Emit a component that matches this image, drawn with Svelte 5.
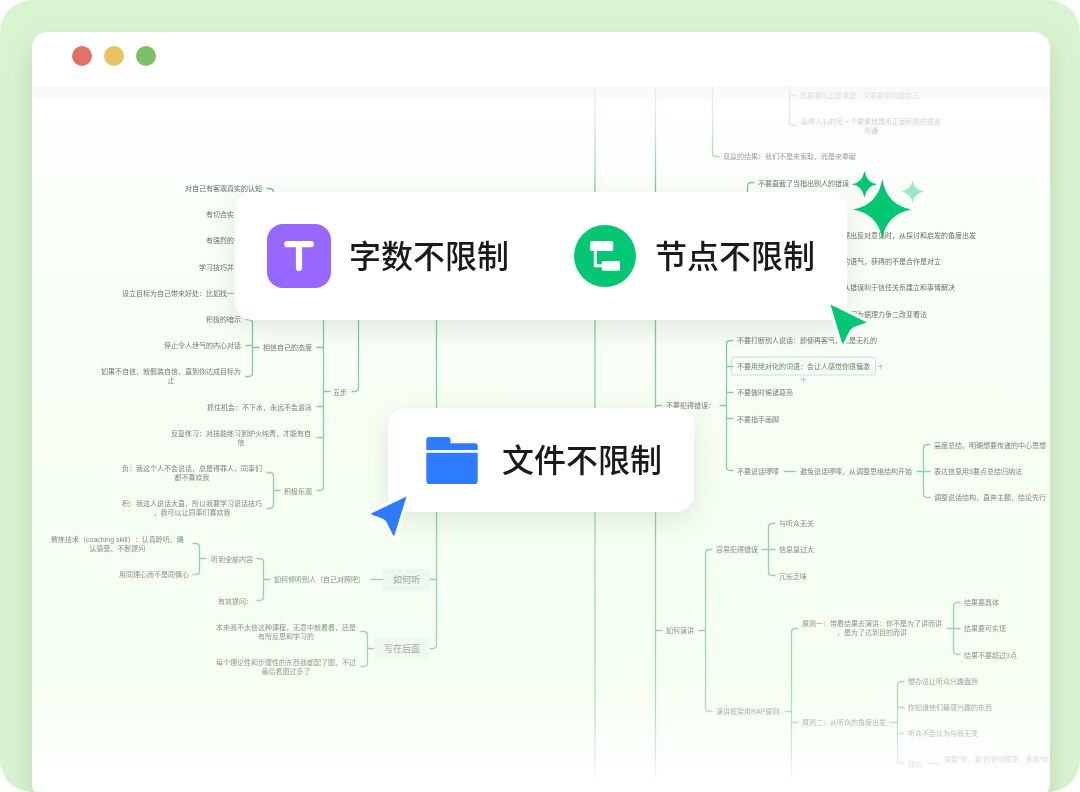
<script>
	// map coordinates share one origin for nodes and connectors
	const origin = { x: 32, y: 86 };

	// x is the left edge of a node, y its vertical centre
	const nodes = [
		{ x: 185, y: 188, text: '对自己有客观真实的认知' },
		{ x: 206, y: 214, text: '有切合实' },
		{ x: 206, y: 240, text: '有强烈的' },
		{ x: 199, y: 267, text: '学习技巧并' },
		{ x: 122, y: 293, text: '设立目标为自己带来好处：比如找一' },
		{ x: 206, y: 319, text: '积极的暗示' },
		{ x: 164, y: 345, text: '停止令人泄气的内心对话' },
		{ x: 101, y: 376, text: '如果不自信，就假装自信，直到你达成目标为\n止' },
		{ x: 263, y: 347, text: '相信自己的态度' },
		{ x: 333, y: 392, text: '五步' },
		{ x: 207, y: 407, text: '抓住机会：不下水，永远不会游泳' },
		{ x: 171, y: 438, text: '反复练习：对技能练习到炉火纯青，才能有自\n信' },
		{ x: 122, y: 473, text: '负：我这个人不会说话，总是得罪人，同事们\n都不喜欢我' },
		{ x: 122, y: 508, text: '积：我这人说话太直，所以我要学习说话技巧\n，我可以让同事们喜欢我' },
		{ x: 284, y: 491, text: '积极乐观' },
		{ x: 51, y: 544, text: '教练技术（coaching skill）：认真聆听、确\n认感受、不断提问' },
		{ x: 119, y: 574, text: '用同理心而不是同情心' },
		{ x: 211, y: 559, text: '听到全部内容' },
		{ x: 218, y: 601, text: '有效提问：' },
		{ x: 274, y: 579, text: '如何倾听别人（自己对照吧）' },
		{ x: 216, y: 632, text: '本来我不太信这种课程，无意中就看看，还是\n有所反思和学习的' },
		{ x: 216, y: 667, text: '每个理论性和步骤性的东西我都配了图，不过\n最后看图过多了' },
		{ x: 383, y: 580, text: '如何听', kind: 'topic' },
		{ x: 374, y: 649, text: '写在后面', kind: 'topic' },

		{ x: 800, y: 95, text: '既要避免过度谦虚，又要避免吹嘘自己' },
		{ x: 801, y: 126, text: '赢得人心的另一个要素就是用正面积极的语言\n沟通' },
		{ x: 723, y: 156, text: '双赢的结果：我们不是来索取，而是来奉献' },
		{ x: 758, y: 183, text: '不要直截了当指出别人的错误' },
		{ x: 843, y: 235, text: '提出反对意见时，从探讨和启发的角度出发' },
		{ x: 843, y: 261, text: '的语气，获得的不是合作是对立' },
		{ x: 843, y: 287, text: '从错误利于信任关系建立和事情解决' },
		{ x: 850, y: 314, text: '因为据理力争二改变看法' },
		{ x: 666, y: 405, text: '不要犯得错误：' },
		{ x: 737, y: 340, text: '不要打断别人说话：即使再客气，也是无礼的' },
		{ x: 731, y: 366, text: '不要用绝对化的词语：会让人感觉你很偏激', kind: 'selected' },
		{ x: 737, y: 392, text: '不要做时候诸葛亮' },
		{ x: 737, y: 419, text: '不要指手画脚' },
		{ x: 737, y: 471, text: '不要说话啰嗦' },
		{ x: 800, y: 471, text: '避免说话啰嗦，从调整思维结构开始' },
		{ x: 934, y: 445, text: '高度总结，明确想要传递的中心思想' },
		{ x: 934, y: 471, text: '表达信息用3要点总结归纳法' },
		{ x: 934, y: 497, text: '调整说话结构，直奔主题，结论先行' },
		{ x: 716, y: 549, text: '容易犯得错误' },
		{ x: 779, y: 523, text: '与听众无关' },
		{ x: 779, y: 549, text: '信息量过大' },
		{ x: 779, y: 576, text: '冗长乏味' },
		{ x: 666, y: 630, text: '如何演讲' },
		{ x: 716, y: 711, text: '演讲框架用RAP原则:' },
		{ x: 802, y: 628, text: '原则一：带着结果去演讲：你不是为了讲而讲\n，是为了达到目的而讲' },
		{ x: 964, y: 602, text: '结果要具体' },
		{ x: 964, y: 628, text: '结果要可实现' },
		{ x: 964, y: 655, text: '结果不要超过3点' },
		{ x: 802, y: 722, text: '原则二：从听众的角度出发' },
		{ x: 908, y: 681, text: '想办法让听众兴趣盎然' },
		{ x: 908, y: 707, text: '你知道他们最感兴趣的东西' },
		{ x: 908, y: 733, text: '听众不会认为与我无关' },
		{ x: 908, y: 764, text: '技巧' },
		{ x: 944, y: 764, text: '调整“你，我”的使用频率，多用“你\n”' }
	];

	// from/to span the trunk, ends are its rounded tips, mids the rows between, stub leads to the parent
	const brackets = [
		{ x: 273, side: -1, from: 188, to: 230, ends: [188] },
		{ x: 252, side: -1, from: 319, to: 376, ends: [319, 376], mids: [345], stub: 347 },
		{ x: 323, side: -1, from: 300, to: 490, ends: [490], mids: [347, 406, 437], stub: 391 },
		{ x: 358, side: -1, from: 300, to: 391, ends: [391] },
		{ x: 273, side: -1, from: 472, to: 508, ends: [472, 508], stub: 490 },
		{ x: 199, side: -1, from: 543, to: 574, ends: [543, 574], stub: 558 },
		{ x: 263, side: -1, from: 558, to: 600, ends: [558, 600], stub: 579 },
		{ x: 436, side: -1, from: 300, to: 648, ends: [648], mids: [579] },
		{ x: 367, side: -1, from: 631, to: 666, ends: [631, 666], stub: 648 },

		{ x: 789, side: 1, from: 86, to: 125, ends: [125], mids: [95] },
		{ x: 712, side: 1, from: 86, to: 156, ends: [156] },
		{ x: 747, side: 1, from: 182, to: 230, ends: [182] },
		{ x: 655, side: 1, from: 86, to: 786, ends: [], mids: [405, 630] },
		{ x: 726, side: 1, from: 340, to: 470, ends: [340, 470], mids: [366, 392, 418], stub: 405 },
		{ x: 923, side: 1, from: 444, to: 497, ends: [444, 497], mids: [471], stub: 471 },
		{ x: 705, side: 1, from: 549, to: 711, ends: [549, 711], stub: 630 },
		{ x: 768, side: 1, from: 523, to: 575, ends: [523, 575], mids: [549], stub: 549 },
		{ x: 791, side: 1, from: 628, to: 790, ends: [628], mids: [722], stub: 711 },
		{ x: 953, side: 1, from: 602, to: 654, ends: [602, 654], mids: [628], stub: 628 },
		{ x: 897, side: 1, from: 681, to: 763, ends: [681, 763], mids: [707, 733], stub: 722 }
	];

	const links = ['M370 579H383', 'M783 471H796', 'M926 763H939'];

	function bracketPath({ x, side, from, to, ends, mids = [], stub }) {
		const tip = x + side * 7;
		const bend = x + side * 4;
		const roundTop = ends.includes(from);
		const roundBottom = ends.includes(to);
		let d = roundTop ? `M${tip} ${from}H${bend}Q${x} ${from} ${x} ${from + 4}` : `M${x} ${from}`;
		d += roundBottom ? `V${to - 4}Q${x} ${to} ${bend} ${to}H${tip}` : `V${to}`;
		for (const y of mids) d += `M${x} ${y}H${tip}`;
		if (stub) d += `M${x} ${stub}H${x - side * 7}`;
		return d;
	}
</script>

<main class="frame">
	<section class="window">
		<header class="titlebar">
			<span class="dot red"></span>
			<span class="dot yellow"></span>
			<span class="dot green"></span>
		</header>

		<div class="canvas">
			<div class="map">
				<svg class="lines" viewBox="32 86 1018 706" aria-hidden="true">
					<path class="root" d="M595 86V786" />
					{#each brackets as bracket}
						<path d={bracketPath(bracket)} transform="translate(.5 .5)" />
					{/each}
					{#each links as d}
						<path {d} transform="translate(.5 .5)" />
					{/each}
					<path class="plus" d="M878 366.500H883M880.500 364V369M801 379.500H806M803.500 377V382" />
				</svg>
				{#each nodes as node}
					<p class="node {node.kind ?? ''}" style="left: {node.x - origin.x}px; top: {node.y - origin.y}px">{node.text}</p>
				{/each}
			</div>

			<div class="cards">
				<div class="card">
					<div class="feature">
						<svg class="icon" viewBox="0 0 64 64" aria-hidden="true">
							<rect width="64" height="64" rx="16" fill="#9767ff" />
							<path d="M20.300 20.200H43.800M32 20.200V44" fill="none" stroke="#fff" stroke-width="6.200" stroke-linecap="round" />
						</svg>
						<h2>字数不限制</h2>
					</div>
					<div class="feature">
						<svg class="icon" viewBox="0 0 64 64" aria-hidden="true">
							<circle cx="32" cy="32" r="31" fill="#04c774" />
							<path d="M22.300 25V41.800H31" fill="none" stroke="#fff" stroke-width="3" />
							<rect x="17.200" y="17" width="23" height="10" rx="1.500" fill="#fff" />
							<rect x="28.800" y="37" width="18.200" height="9.800" rx="1.500" fill="#fff" />
						</svg>
						<h2>节点不限制</h2>
					</div>
					<svg class="sparkles" viewBox="0 0 72 68" aria-hidden="true">
						<path d="M12.500 0Q14.500 11.500 25 13.300Q14.500 15 12.500 26.500Q10.500 15 0 13.300Q10.500 11.500 12.500 0Z" />
						<path d="M30.300 8Q34.500 34 59.500 38.500Q34.500 43 30.300 68Q26 43 1 38.500Q26 34 30.300 8Z" />
						<path class="pale" d="M60.500 9.500Q62.300 18.700 71.500 20.500Q62.300 22.300 60.500 32Q58.700 22.300 49.500 20.500Q58.700 18.700 60.500 9.500Z" />
					</svg>
					<svg class="pointer right" viewBox="0 0 44 48" aria-hidden="true">
						<path d="M4.500 4.500L39.500 21.800Q40.500 22.500 39.500 23L30.500 26Q25.500 27.500 23.500 31L17.500 43Q16.600 44.300 16 43Z" />
					</svg>
				</div>

				<div class="card small">
					<div class="feature">
						<svg class="icon" viewBox="0 0 64 64" fill="#2e7bff" aria-hidden="true">
							<path d="M6.300 22V12Q6.300 9 9.300 9H27.500Q30.500 9 30.500 12V15.300H55Q57.700 15.300 57.700 18V22Z" />
							<path d="M6.300 24.700H57.700V53Q57.700 56 54.700 56H9.300Q6.300 56 6.300 53Z" />
						</svg>
						<h2>文件不限制</h2>
					</div>
					<svg class="pointer left" viewBox="0 0 44 48" aria-hidden="true">
						<path d="M39.500 4.500L4.500 21.300Q3.500 22 4.500 22.500L14 26Q19 27.500 20.500 32L26 43Q26.800 44.300 27.500 43Z" />
					</svg>
				</div>
			</div>
		</div>
	</section>
</main>

<style>
	:global(body) {
		background: #fff;
		font-family: "Liberation Sans", "Noto Sans CJK SC", sans-serif;
	}

	.frame {
		display: flex;
		box-sizing: border-box;
		min-height: 100vh;
		padding: 32px 30px 0 32px;
		background: #d9f4d1;
		border-radius: 32px;
		overflow: hidden;
	}

	/* the lower edge runs out of the frame */
	.window {
		flex: 1;
		min-width: 0;
		display: flex;
		flex-direction: column;
		margin-bottom: -7px;
		background: #fff;
		border-radius: 16px;
		box-shadow: 0 12px 28px rgba(60, 90, 50, 0.18);
		overflow: hidden;
	}

	.titlebar {
		display: flex;
		gap: 12px;
		box-sizing: border-box;
		height: 54px;
		padding: 14px 40px;
	}

	.dot {
		width: 20px;
		height: 20px;
		border-radius: 50%;
	}

	.red {
		background: #e17065;
	}

	.yellow {
		background: #eac262;
	}

	.green {
		background: #7cc164;
	}

	.canvas {
		flex: 1;
		display: grid;
		grid-template-columns: minmax(0, 1fr);
		background:
			linear-gradient(#f8f8f8, rgba(251, 251, 251, 0.8) 14px, transparent 15px),
			linear-gradient(#fff, #fbfffa 16%, #f6fff3 55%, #f6fff3 84%, #fff 97%);
	}

	.map,
	.cards {
		grid-area: 1 / 1;
	}

	.map {
		position: relative;
		justify-self: center;
		width: 1018px;
		height: 706px;
		mask-image: linear-gradient(
			rgba(0, 0, 0, 0.15),
			rgba(0, 0, 0, 0.35) 6%,
			rgba(0, 0, 0, 0.7) 11%,
			#000 15%,
			rgba(0, 0, 0, 0.8) 55%,
			rgba(0, 0, 0, 0.7) 80%,
			rgba(0, 0, 0, 0.5) 90%,
			rgba(0, 0, 0, 0.22) 96%,
			transparent 99%
		);
	}

	.lines {
		display: block;
		width: 100%;
		height: 100%;
		fill: none;
		stroke: #74c298;
		stroke-width: 1.3px;
	}

	.lines .root {
		stroke: #a9dbbf;
		stroke-width: 2px;
	}

	.lines .plus {
		stroke: #8cc8f5;
		stroke-width: 1px;
	}

	.node {
		position: absolute;
		margin: 0;
		transform: translateY(-50%);
		color: #626862;
		font-size: 7px;
		line-height: 9px;
		text-align: center;
		text-spacing-trim: space-all;
		white-space: pre;
	}

	.topic {
		padding: 5px 10px;
		border-radius: 2px;
		background: #ecf6ec;
		color: #7a827a;
		font-size: 9px;
		line-height: 12px;
	}

	.selected {
		padding: 4px 5px;
		border: 1px solid #a9e0f7;
		border-radius: 3px;
	}

	.cards {
		z-index: 1;
		display: flex;
		flex-direction: column;
		align-items: center;
		gap: 88px;
		padding: 106px 0 88px;
	}

	.card {
		position: relative;
		display: flex;
		gap: 64px;
		padding: 32px;
		background: #fff;
		border-radius: 18px;
		box-shadow: 0 8px 28px rgba(50, 70, 50, 0.13);
	}

	.small {
		padding: 20px 32px;
	}

	.feature {
		display: flex;
		align-items: center;
		gap: 18px;
	}

	.icon {
		width: 64px;
		height: 64px;
	}

	h2 {
		margin: 0;
		padding-top: 2px;
		color: #1a1a1a;
		font-size: 32px;
		font-weight: 500;
		line-height: 48px;
	}

	.sparkles {
		position: absolute;
		top: -21px;
		right: -77px;
		width: 72px;
		height: 68px;
		fill: #04c774;
	}

	.pale {
		opacity: 0.4;
	}

	.pointer {
		position: absolute;
		width: 44px;
		height: 48px;
		stroke: #fff;
		stroke-width: 6px;
		stroke-linejoin: round;
		paint-order: stroke;
		overflow: visible;
	}

	.pointer.right {
		right: -23px;
		bottom: -28px;
		fill: #04c774;
	}

	.pointer.left {
		bottom: -28px;
		left: -21px;
		fill: #2e7bff;
	}
</style>
